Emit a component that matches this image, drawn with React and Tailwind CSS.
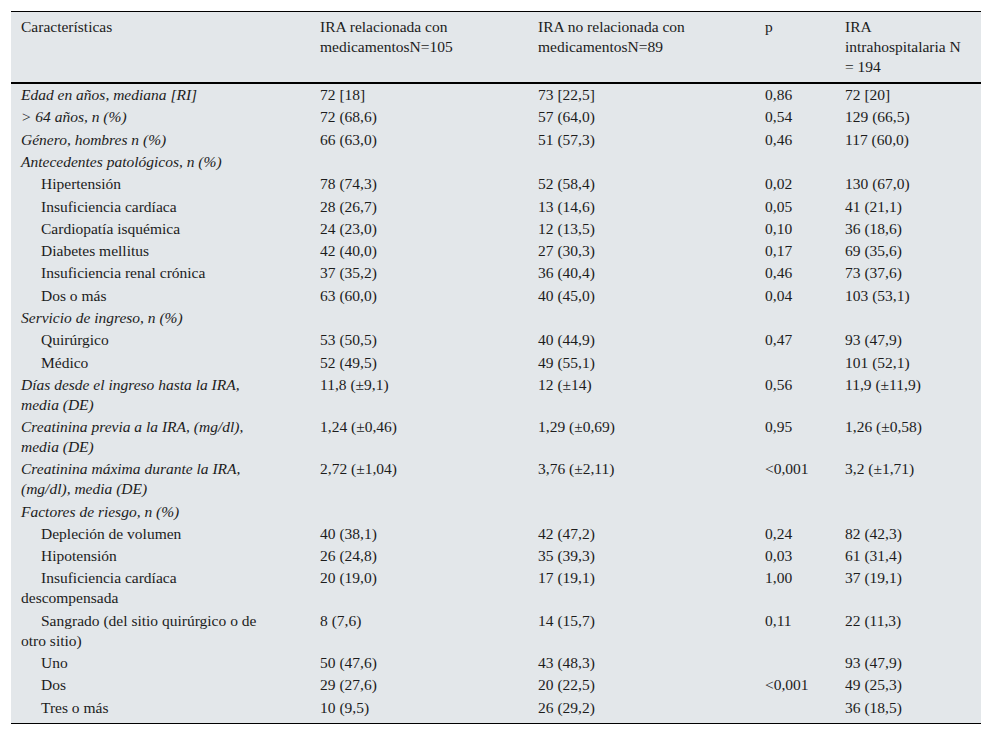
const rows = [
  { label: 'Edad en años, mediana [RI]', it: true, v: ['72 [18]', '73 [22,5]', '0,86', '72 [20]'] },
  { label: '> 64 años, n (%)', it: true, v: ['72 (68,6)', '57 (64,0)', '0,54', '129 (66,5)'] },
  { label: 'Género, hombres n (%)', it: true, v: ['66 (63,0)', '51 (57,3)', '0,46', '117 (60,0)'] },
  { label: 'Antecedentes patológicos, n (%)', it: true, v: ['', '', '', ''] },
  { label: 'Hipertensión', sub: true, v: ['78 (74,3)', '52 (58,4)', '0,02', '130 (67,0)'] },
  { label: 'Insuficiencia cardíaca', sub: true, v: ['28 (26,7)', '13 (14,6)', '0,05', '41 (21,1)'] },
  { label: 'Cardiopatía isquémica', sub: true, v: ['24 (23,0)', '12 (13,5)', '0,10', '36 (18,6)'] },
  { label: 'Diabetes mellitus', sub: true, v: ['42 (40,0)', '27 (30,3)', '0,17', '69 (35,6)'] },
  { label: 'Insuficiencia renal crónica', sub: true, v: ['37 (35,2)', '36 (40,4)', '0,46', '73 (37,6)'] },
  { label: 'Dos o más', sub: true, v: ['63 (60,0)', '40 (45,0)', '0,04', '103 (53,1)'] },
  { label: 'Servicio de ingreso, n (%)', it: true, v: ['', '', '', ''] },
  { label: 'Quirúrgico', sub: true, v: ['53 (50,5)', '40 (44,9)', '0,47', '93 (47,9)'] },
  { label: 'Médico', sub: true, v: ['52 (49,5)', '49 (55,1)', '', '101 (52,1)'] },
  { label: 'Días desde el ingreso hasta la IRA, media (DE)', it: true, v: ['11,8 (±9,1)', '12 (±14)', '0,56', '11,9 (±11,9)'] },
  { label: 'Creatinina previa a la IRA, (mg/dl), media (DE)', it: true, v: ['1,24 (±0,46)', '1,29 (±0,69)', '0,95', '1,26 (±0,58)'] },
  { label: 'Creatinina máxima durante la IRA, (mg/dl), media (DE)', it: true, v: ['2,72 (±1,04)', '3,76 (±2,11)', '<0,001', '3,2 (±1,71)'] },
  { label: 'Factores de riesgo, n (%)', it: true, v: ['', '', '', ''] },
  { label: 'Depleción de volumen', sub: true, v: ['40 (38,1)', '42 (47,2)', '0,24', '82 (42,3)'] },
  { label: 'Hipotensión', sub: true, v: ['26 (24,8)', '35 (39,3)', '0,03', '61 (31,4)'] },
  { label: 'Insuficiencia cardíaca descompensada', sub: true, v: ['20 (19,0)', '17 (19,1)', '1,00', '37 (19,1)'] },
  { label: 'Sangrado (del sitio quirúrgico o de otro sitio)', sub: true, v: ['8 (7,6)', '14 (15,7)', '0,11', '22 (11,3)'] },
  { label: 'Uno', sub: true, v: ['50 (47,6)', '43 (48,3)', '', '93 (47,9)'] },
  { label: 'Dos', sub: true, v: ['29 (27,6)', '20 (22,5)', '<0,001', '49 (25,3)'] },
  { label: 'Tres o más', sub: true, v: ['10 (9,5)', '26 (29,2)', '', '36 (18,5)'] },
];

export default function App() {
  return (
    <div className="min-h-screen bg-white pt-[11px] pl-[11px]" style={{ fontFamily: '"Liberation Serif", "Times New Roman", serif' }}>
      <table className="w-[970px] table-fixed border-collapse bg-[#e3e7ea] text-[15.5px] leading-5 text-[#1c1c1c]">
        <colgroup>
          <col className="w-[299px]" />
          <col className="w-[218px]" />
          <col className="w-[227px]" />
          <col className="w-[80px]" />
          <col className="w-[146px]" />
        </colgroup>
        <thead>
          <tr className="border-t border-b-2 border-t-black border-b-black align-top text-left">
            <th className="pl-[10px] pr-[36px] pt-[5px] pb-[5px] font-normal">Características</th>
            <th className="px-[10px] pt-[5px] pb-[5px] font-normal">IRA relacionada con medicamentosN=105</th>
            <th className="px-[10px] pt-[5px] pb-[5px] font-normal">IRA no relacionada con medicamentosN=89</th>
            <th className="px-[10px] pt-[5px] pb-[5px] font-normal">p</th>
            <th className="px-[10px] pt-[5px] pb-[5px] font-normal">IRA intrahospitalaria N = 194</th>
          </tr>
        </thead>
        <tbody className="border-b border-black">
          {rows.map((r, i) => {
            const last = i === rows.length - 1;
            const pad = last ? 'pt-[1.15px] pb-[5.5px]' : 'py-[1.15px]';
            return (
              <tr key={i} className="align-top">
                <td className={`pl-[10px] pr-[36px] ${pad} ${r.it ? 'italic' : ''} ${r.sub ? 'indent-5' : ''}`}>{r.label}</td>
                {r.v.map((c, j) => (
                  <td key={j} className={`px-[10px] ${pad}`}>{c}</td>
                ))}
              </tr>
            );
          })}
        </tbody>
      </table>
    </div>
  );
}
